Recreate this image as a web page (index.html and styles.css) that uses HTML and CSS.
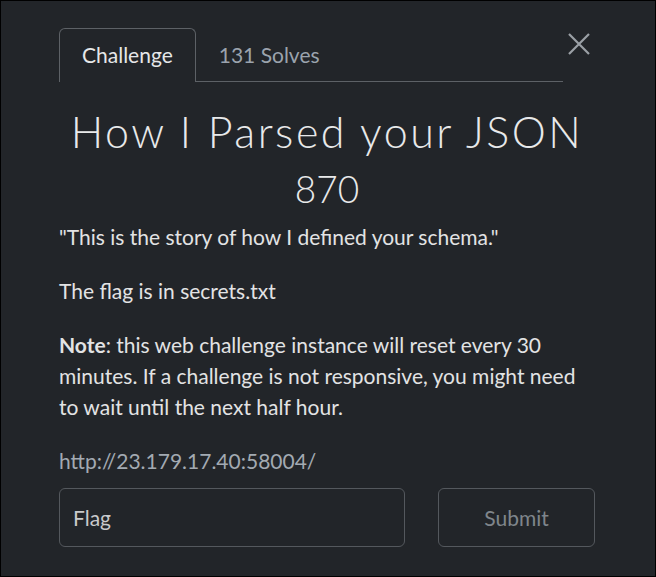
FILE: index.html
```html
<!DOCTYPE html>
<html lang="en">

<head>
    <meta charset="UTF-8">
    <meta name="viewport" content="width=device-width, initial-scale=1.0">
    <title>How I Parsed your JSON</title>
    <link rel="stylesheet" href="styles.css">
</head>

<body>
    <div class="modal">
        <div class="modal-header">
            <ul class="tabs">
                <li class="tab active">Challenge</li>
                <li class="tab">131 Solves</li>
            </ul>
            <button type="button" class="close" aria-label="Close">
                <svg width="22" height="22" viewBox="0 0 22 22">
                    <path d="M1 1 L21 21 M21 1 L1 21" stroke="#9ba0a6" stroke-width="2.2" fill="none"/>
                </svg>
            </button>
        </div>

        <h2 class="challenge-name">How I Parsed your JSON</h2>
        <h3 class="challenge-value">870</h3>

        <div class="challenge-desc">
            <p>"This is the story of how I defined your schema."</p>
            <p>The flag is in secrets.txt</p>
            <p><strong>Note</strong>: this web challenge instance will reset every 30 minutes. If a challenge is not responsive, you might need to wait until the next half hour.</p>
            <p class="link">http://23.179.17.40:58004/</p>
        </div>

        <!-- formulario da flag -->
        <form class="submit-row">
            <input type="text" class="flag-input" placeholder="Flag">
            <button type="button" class="submit-btn">Submit</button>
        </form>
    </div>
</body>

</html>
```

FILE: styles.css
```css
body {
    margin: 0;
    font-family: Lato, "Noto Sans", sans-serif;
    background: #000;
}

.modal {
    box-sizing: border-box;
    width: 656px;
    height: 577px;
    border: 1px solid #000;
    background: #222529;
    padding: 27px 60px 0 58px;
    color: #e2e3e4;
}

.modal-header {
    display: flex;
    align-items: flex-start;
}

.tabs {
    display: flex;
    list-style: none;
    margin: 0;
    padding: 0;
    width: 504px;
    border-bottom: 1px solid #5d6166;
}

.tab {
    font-size: 21px;
    height: 52px;
    line-height: 52px;
    padding: 0 22px;
    border: 1px solid transparent;
    border-bottom: none;
    color: #9ba3ad;
    margin-bottom: -1px;
}

.tab.active {
    color: #e6e7e8;
    background: #222529;
    border-color: #5d6166;
    border-radius: 6px 6px 0 0;
    height: 53px;
}

.close {
    margin: 5px 0 0 5px;
    padding: 0;
    border: none;
    background: none;
    width: 22px;
    height: 22px;
    cursor: pointer;
}

.close svg {
    display: block;
}

.challenge-name {
    font-size: 43px;
    font-weight: 300;
    letter-spacing: 2.5px;
    text-align: center;
    margin: 20px 0 0;
    line-height: 60px;
    color: #e8e9ea;
}

.challenge-value {
    font-size: 37px;
    font-weight: 300;
    text-align: center;
    margin: 4px 0 0;
    line-height: 46px;
    color: #e8e9ea;
}

.challenge-desc {
    font-size: 21px;
    line-height: 31px;
    margin-top: 9px;
}

.challenge-desc p {
    margin: 0 0 23px;
}

.challenge-desc .link {
    margin-bottom: 12px;
    color: #a3aab2;
}

.challenge-desc strong {
    font-weight: 700;
}

.submit-row {
    display: flex;
    gap: 33px;
}

.flag-input {
    box-sizing: border-box;
    width: 346px;
    height: 59px;
    background: transparent;
    border: 1px solid #54585d;
    border-radius: 6px;
    padding: 0 13px;
    font-family: Lato, sans-serif;
    font-size: 21px;
    color: #e4e5e6;
}

.flag-input::placeholder {
    color: #c9cacb;
}

.submit-btn {
    box-sizing: border-box;
    width: 157px;
    height: 59px;
    background: transparent;
    border: 1px solid #54585d;
    border-radius: 6px;
    font-family: Lato, sans-serif;
    font-size: 21px;
    color: #7f858b;
}
```
